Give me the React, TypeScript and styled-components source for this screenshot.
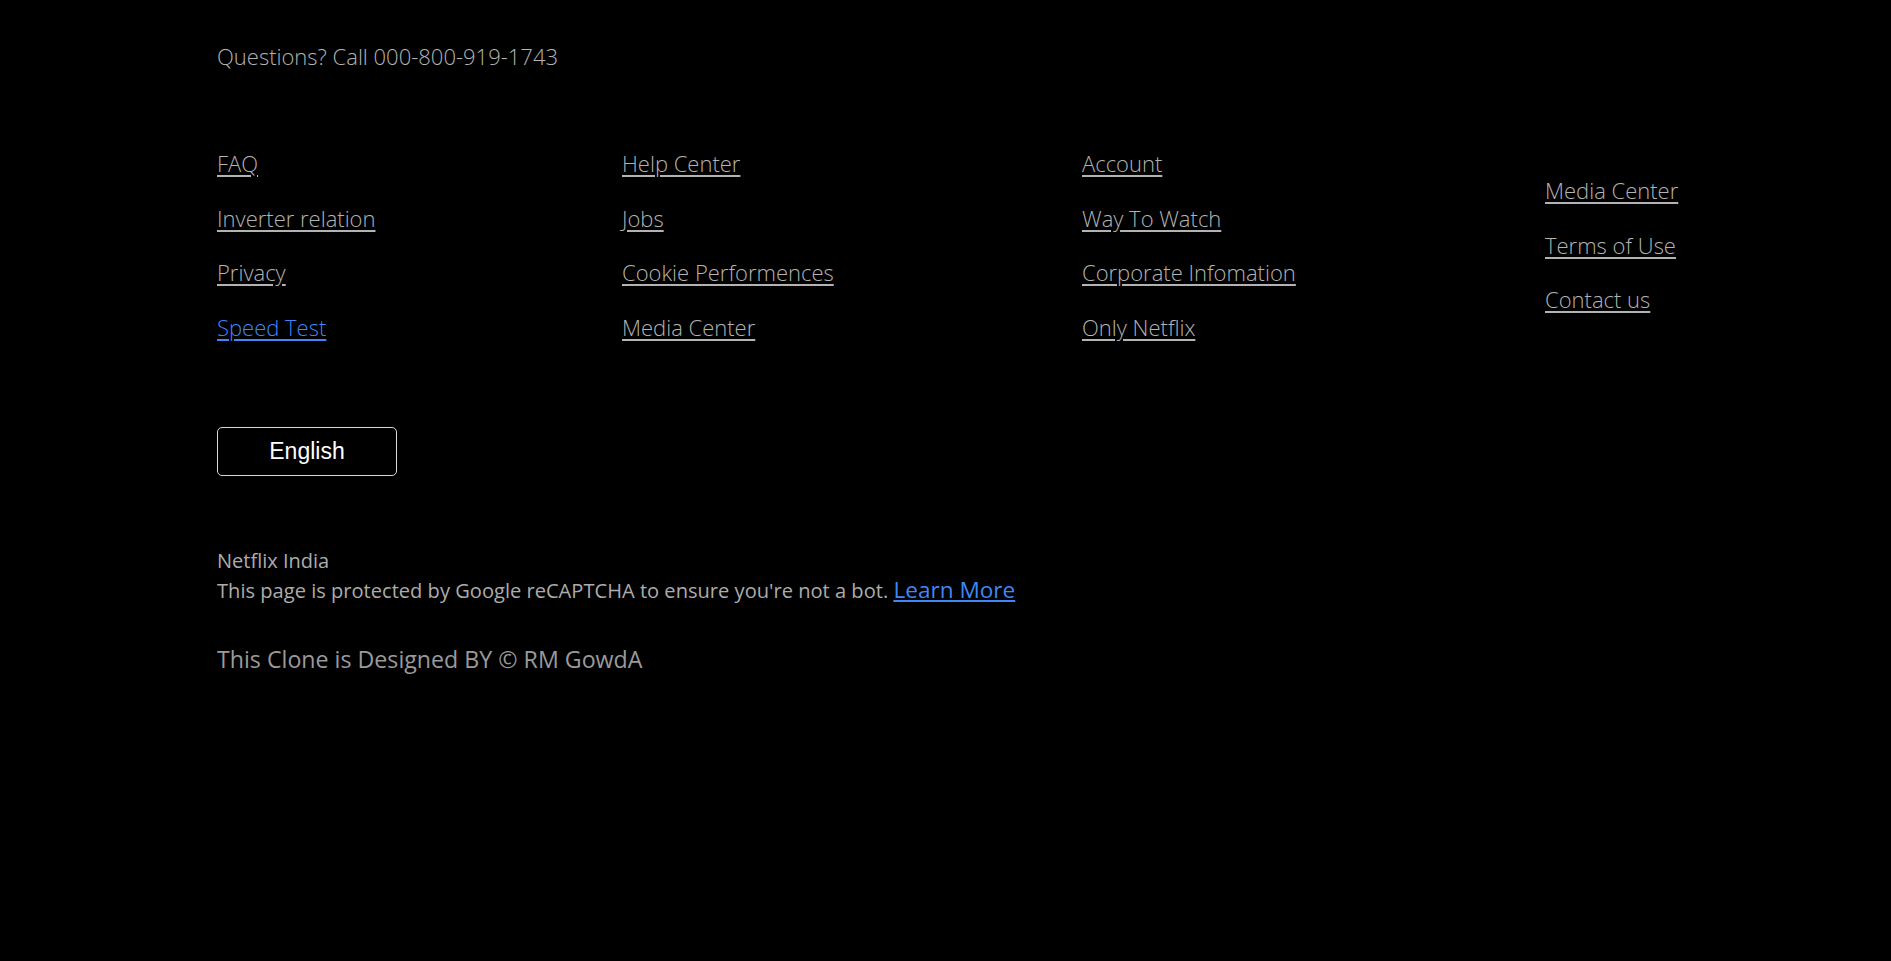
import React from "react";
import styled, { createGlobalStyle } from "styled-components";

const GlobalStyle = createGlobalStyle`
    html, body {
        margin: 0;
        padding: 0;
        background: #000;
    }
    body {
        font-family: "Open Sans", "Noto Sans", sans-serif;
        color: #b3b3b3;
    }
`;

const columns: string[][] = [
    ["FAQ", "Inverter relation", "Privacy", "Speed Test"],
    ["Help Center", "Jobs", "Cookie Performences", "Media Center"],
    ["Account", "Way To Watch", "Corporate Infomation", "Only Netflix"],
    ["Media Center", "Terms of Use", "Contact us"],
];

export default function App() {
    return (
        <>
            <GlobalStyle />
            <Footer>
                <Questions>Questions? Call 000-800-919-1743</Questions>
                <LinkGrid>
                    {columns.map((col, i) => (
                        <LinkColumn key={i}>
                            {col.map((label) => (
                                <li key={label}>
                                    <FooterLink href="#" $active={label === "Speed Test"}>
                                        {label}
                                    </FooterLink>
                                </li>
                            ))}
                        </LinkColumn>
                    ))}
                </LinkGrid>
                <LanguageButton>English</LanguageButton>
                <Region>Netflix India</Region>
                <Captcha>
                    This page is protected by Google reCAPTCHA to ensure you're not a bot.{" "}
                    <LearnMore href="#">Learn More</LearnMore>
                </Captcha>
                <Credit>This Clone is Designed BY © RM GowdA</Credit>
            </Footer>
        </>
    );
}

const Footer = styled.footer`
    padding: 40px 0 120px 217px;
    display: flex;
    flex-direction: column;
    align-items: flex-start;
`;

const Questions = styled.p`
    margin: 0;
    font-size: 22px;
    font-weight: 300;
    line-height: 32px;
    color: #b3b3b3;
`;

const LinkGrid = styled.div`
    margin-top: 75px;
    display: grid;
    grid-template-columns: 405px 460px 463px 1fr;
    align-items: center;
    width: 1674px;
`;

const LinkColumn = styled.ul`
    list-style: none;
    margin: 0;
    padding: 0;
    display: flex;
    flex-direction: column;
    gap: 22.5px;
`;

const FooterLink = styled.a<{ $active?: boolean }>`
    display: inline-block;
    font-size: 22px;
    font-weight: 300;
    line-height: 32px;
    color: ${(p) => (p.$active ? "#3f86f7" : "#b3b3b3")};
    text-decoration: underline;
    text-underline-offset: 3px;
`;

const LanguageButton = styled.button`
    margin-top: 84px;
    width: 180px;
    height: 49px;
    background: #000;
    border: 1px solid #d9d9d9;
    border-radius: 5px;
    color: #fff;
    font-family: "Liberation Sans", Arial, sans-serif;
    font-size: 23px;
    cursor: pointer;
`;

const Region = styled.p`
    margin: 70px 0 0;
    font-size: 20px;
    line-height: 30px;
    color: #acacac;
`;

const Captcha = styled.p`
    margin: 0;
    font-size: 20.1px;
    line-height: 29px;
    color: #acacac;
`;

const LearnMore = styled.a`
    font-size: 22.6px;
    line-height: 1;
    color: #3f86f7;
    text-decoration: underline;
`;

const Credit = styled.p`
    margin: 38px 0 0;
    font-size: 23.2px;
    line-height: 32px;
    color: #9a9a9a;
`;
